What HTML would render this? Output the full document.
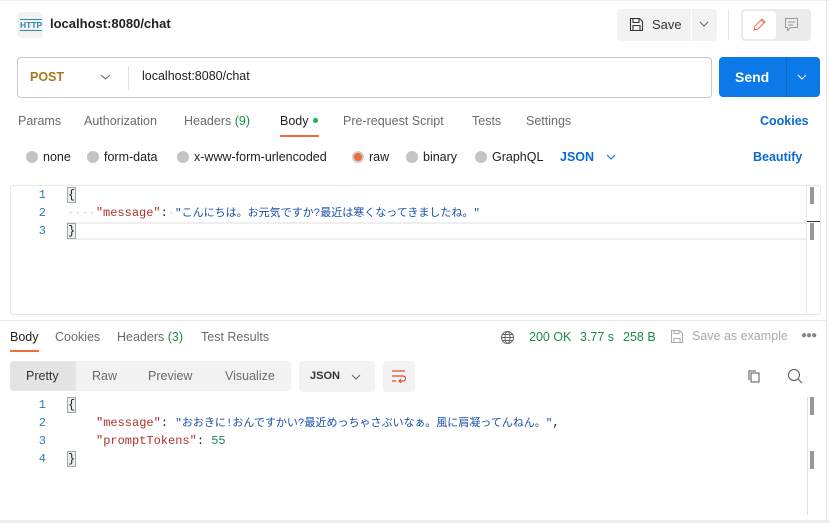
<!DOCTYPE html>
<html><head><meta charset="utf-8"><style>
*{margin:0;padding:0;box-sizing:border-box}
body{width:830px;height:523px;background:#fff;font-family:"Liberation Sans","Noto Sans CJK JP",sans-serif;font-size:12.5px;color:#212121;position:relative;overflow:hidden}
.a{position:absolute;white-space:nowrap}
.g{color:#6b6b6b}
.mono{font-family:"Liberation Mono","Noto Sans CJK JP",monospace;font-size:12px;line-height:16px}
.ln{color:#2f7bb0;width:12px;text-align:right}
.k{color:#b0302a}.s{color:#1a4fa8;font-size:11px}.n{color:#1d8a5a}
.dot{width:12px;height:12px;border-radius:50%;background:#c4c4c4}
.brace{border:1px solid #9aa;background:#eef0ee;line-height:14px!important;height:16px}
</style></head><body>
<div class="a" style="left:0;top:0;width:830px;height:1px;background:#eee"></div>
<div class="a" style="left:826px;top:0;width:1px;height:523px;background:#e6e6e6"></div>
<div class="a" style="left:17px;top:12px;width:26px;height:26px;border-radius:4px;background:#f3f3f3"></div>
<div class="a" style="left:20px;top:19px;font-size:8.5px;color:#2a8aa0;font-weight:bold;border-top:1px solid #2a8aa0;border-bottom:1px solid #2a8aa0;line-height:10px">HTTP</div>
<div class="a" style="left:50px;top:16px;font-size:13px;font-weight:bold;color:#212121">localhost:8080/chat</div>
<div class="a" style="left:617px;top:9px;width:74px;height:32px;background:#f2f2f2;border-radius:4px 0 0 4px"></div>
<div class="a" style="left:692px;top:9px;width:25px;height:32px;background:#f2f2f2;border-radius:0 4px 4px 0"></div>
<svg class="a" style="left:629px;top:17px" width="15" height="15" viewBox="0 0 15 15"><path d="M1.5 1.5h9l3 3v9h-12z M4 1.5v4h6v-4 M4 13.5v-5h7v5" fill="none" stroke="#333" stroke-width="1.1"/></svg>
<div class="a" style="left:652px;top:17px;font-size:13px;color:#333">Save</div>
<svg class="a" style="left:699px;top:21px" width="10" height="6"><path d="M1 1l4 4 4-4" fill="none" stroke="#666"/></svg>
<div class="a" style="left:728px;top:10px;width:1px;height:30px;background:#e6e6e6"></div>
<div class="a" style="left:741px;top:9px;width:70px;height:32px;background:#ebebeb;border-radius:4px"></div>
<div class="a" style="left:743px;top:11px;width:33px;height:28px;background:#fff;border-radius:3px"></div>
<svg class="a" style="left:752px;top:17px" width="15" height="15"><path d="M2 13l1-4 7-7 3 3-7 7z M9 3l3 3" fill="none" stroke="#e8764f" stroke-width="1.1"/></svg>
<svg class="a" style="left:784px;top:17px" width="15" height="15"><path d="M1.5 1.5h12v9h-7l-3 3v-3h-2z M4 5h7 M4 8h5" fill="none" stroke="#999" stroke-width="1"/></svg>
<div class="a" style="left:17px;top:57px;width:695px;height:41px;border:1px solid #c8c8c8;border-radius:4px"></div>
<div class="a" style="left:30px;top:70px;font-size:12.5px;font-weight:bold;color:#a8781a">POST</div>
<svg class="a" style="left:100px;top:74px" width="11" height="6"><path d="M1 1l4.5 4 4.5-4" fill="none" stroke="#666"/></svg>
<div class="a" style="left:128px;top:66px;width:1px;height:24px;background:#e0e0e0"></div>
<div class="a" style="left:142px;top:69px;font-size:12.5px;color:#212121">localhost:8080/chat</div>
<div class="a" style="left:719px;top:57px;width:101px;height:40px;background:#0b7ae8;border-radius:4px"></div>
<div class="a" style="left:786px;top:57px;width:1px;height:40px;background:#0968c8"></div>
<div class="a" style="left:735px;top:69px;font-size:14px;font-weight:bold;color:#fff">Send</div>
<svg class="a" style="left:797px;top:74px" width="10" height="6"><path d="M1 1l4 4 4-4" fill="none" stroke="#fff"/></svg>
<div class="a g" style="left:18px;top:114px">Params</div>
<div class="a g" style="left:84px;top:114px">Authorization</div>
<div class="a g" style="left:184px;top:114px">Headers <span style="color:#1d8a4a">(9)</span></div>
<div class="a" style="left:280px;top:114px;color:#212121">Body</div>
<div class="a" style="left:313px;top:118px;width:5px;height:5px;border-radius:50%;background:#19b060"></div>
<div class="a" style="left:280px;top:135px;width:39px;height:2px;background:#f26b3a"></div>
<div class="a g" style="left:343px;top:114px">Pre-request Script</div>
<div class="a g" style="left:472px;top:114px">Tests</div>
<div class="a g" style="left:526px;top:114px">Settings</div>
<div class="a" style="left:760px;top:114px;color:#0b6ad0;font-weight:bold">Cookies</div>
<div class="a dot" style="left:26px;top:151px"></div><div class="a" style="left:43px;top:150px">none</div>
<div class="a dot" style="left:87px;top:151px"></div><div class="a" style="left:104px;top:150px">form-data</div>
<div class="a dot" style="left:177px;top:151px"></div><div class="a" style="left:194px;top:150px">x-www-form-urlencoded</div>
<div class="a dot" style="left:352px;top:151px;background:#f26b3a;border:2px solid #ccc"></div><div class="a" style="left:369px;top:150px">raw</div>
<div class="a dot" style="left:406px;top:151px"></div><div class="a" style="left:423px;top:150px">binary</div>
<div class="a dot" style="left:475px;top:151px"></div><div class="a" style="left:492px;top:150px">GraphQL</div>
<div class="a" style="left:560px;top:150px;color:#0b6ad0;font-weight:bold">JSON</div>
<svg class="a" style="left:606px;top:154px" width="10" height="6"><path d="M1 1l4 4 4-4" fill="none" stroke="#0b6ad0"/></svg>
<div class="a" style="left:753px;top:150px;color:#0b6ad0;font-weight:bold">Beautify</div>
<div class="a" style="left:10px;top:185px;width:811px;height:130px;border:1px solid #e6e6e6;border-radius:3px"></div>
<div class="a" style="left:806px;top:186px;width:1px;height:128px;background:#e6e6e6"></div>
<div class="a" style="left:810px;top:187px;width:4px;height:17px;background:#999"></div>
<div class="a" style="left:810px;top:223px;width:4px;height:17px;background:#999"></div>
<div class="a" style="left:807px;top:221px;width:13px;height:1px;background:#333"></div>
<div class="a" style="left:66px;top:222px;width:740px;height:18px;border-top:2px solid #eee;border-bottom:2px solid #eee"></div>
<div class="a mono ln" style="left:34px;top:187px">1</div>
<div class="a mono ln" style="left:34px;top:205px">2</div>
<div class="a mono ln" style="left:34px;top:223px">3</div>
<div class="a mono brace" style="left:67px;top:187px">{</div>
<div class="a mono" style="left:67px;top:205px"><span style="color:#ccc">····</span><span class="k">"message"</span>:<span style="color:#ccc">·</span><span class="s">"こんにちは。お元気ですか?最近は寒くなってきましたね。"</span></div>
<div class="a mono brace" style="left:67px;top:223px">}</div>
<div class="a" style="left:0;top:320px;width:826px;height:1px;background:#e8e8e8"></div>
<div class="a" style="left:10px;top:330px;color:#212121">Body</div>
<div class="a" style="left:10px;top:350px;width:29px;height:2px;background:#f26b3a"></div>
<div class="a g" style="left:55px;top:330px">Cookies</div>
<div class="a g" style="left:117px;top:330px">Headers <span style="color:#1d8a4a">(3)</span></div>
<div class="a g" style="left:201px;top:330px">Test Results</div>
<svg class="a" style="left:500px;top:330px" width="15" height="15"><g fill="none" stroke="#666"><circle cx="7.5" cy="7.5" r="6"/><ellipse cx="7.5" cy="7.5" rx="2.5" ry="6"/><path d="M1.5 7.5h12 M2.5 4.5h10 M2.5 10.5h10"/></g></svg>
<div class="a" style="left:529px;top:330px;color:#1d8a4a">200 OK</div>
<div class="a" style="left:580px;top:330px;color:#1d8a4a">3.77 s</div>
<div class="a" style="left:623px;top:330px;color:#1d8a4a">258 B</div>
<svg class="a" style="left:670px;top:329px" width="14" height="15"><path d="M1.5 1.5h8l3 3v9h-11z M4 1.5v3h5v-3 M4 13.5v-4h6v4" fill="none" stroke="#aaa"/></svg>
<div class="a" style="left:692px;top:329px;color:#aaa">Save as example</div>
<div class="a" style="left:801px;top:330px;color:#888;font-size:10px;letter-spacing:-1px">●●●</div>
<div class="a" style="left:10px;top:361px;width:281px;height:30px;background:#f2f2f2;border-radius:4px"></div>
<div class="a" style="left:10px;top:361px;width:66px;height:30px;background:#e4e4e4;border-radius:4px 0 0 4px"></div>
<div class="a" style="left:26px;top:369px;color:#333">Pretty</div>
<div class="a g" style="left:92px;top:369px">Raw</div>
<div class="a g" style="left:148px;top:369px">Preview</div>
<div class="a g" style="left:225px;top:369px">Visualize</div>
<div class="a" style="left:299px;top:361px;width:76px;height:31px;background:#f2f2f2;border-radius:4px"></div>
<div class="a" style="left:310px;top:370px;color:#333;font-weight:bold;font-size:11px">JSON</div>
<svg class="a" style="left:351px;top:374px" width="10" height="6"><path d="M1 1l4 4 4-4" fill="none" stroke="#666"/></svg>
<div class="a" style="left:383px;top:361px;width:32px;height:31px;background:#f2f2f2;border-radius:4px"></div>
<svg class="a" style="left:391px;top:369px" width="16" height="14"><path d="M1 2h13 M1 7h11a2.5 2.5 0 0 1 0 5h-4 M10 10l-2 2 2 2 M1 12h4" fill="none" stroke="#e0502a" stroke-width="1.2"/></svg>
<svg class="a" style="left:747px;top:369px" width="16" height="16"><path d="M4 4h8v9h-8z M2 11v-9h7" fill="none" stroke="#555"/></svg>
<svg class="a" style="left:787px;top:368px" width="16" height="16"><circle cx="7" cy="7" r="5.5" fill="none" stroke="#555"/><path d="M11 11l4 4" stroke="#555"/></svg>
<div class="a" style="left:807px;top:397px;width:1px;height:118px;background:#e0e0e0"></div>
<div class="a" style="left:810px;top:397px;width:4px;height:18px;background:#999"></div>
<div class="a" style="left:810px;top:451px;width:4px;height:18px;background:#999"></div>
<div class="a mono ln" style="left:34px;top:397px">1</div>
<div class="a mono ln" style="left:34px;top:415px">2</div>
<div class="a mono ln" style="left:34px;top:433px">3</div>
<div class="a mono ln" style="left:34px;top:451px">4</div>
<div class="a mono brace" style="left:67px;top:397px">{</div>
<div class="a mono" style="left:96px;top:415px"><span class="k">"message"</span>: <span class="s">"おおきに!おんですかい?最近めっちゃさぶいなぁ。風に肩凝ってんねん。"</span>,</div>
<div class="a mono" style="left:96px;top:433px"><span class="k">"promptTokens"</span>: <span class="n">55</span></div>
<div class="a mono brace" style="left:67px;top:451px">}</div>
<div class="a" style="left:0;top:520px;width:830px;height:3px;background:#eee"></div>
</body></html>
